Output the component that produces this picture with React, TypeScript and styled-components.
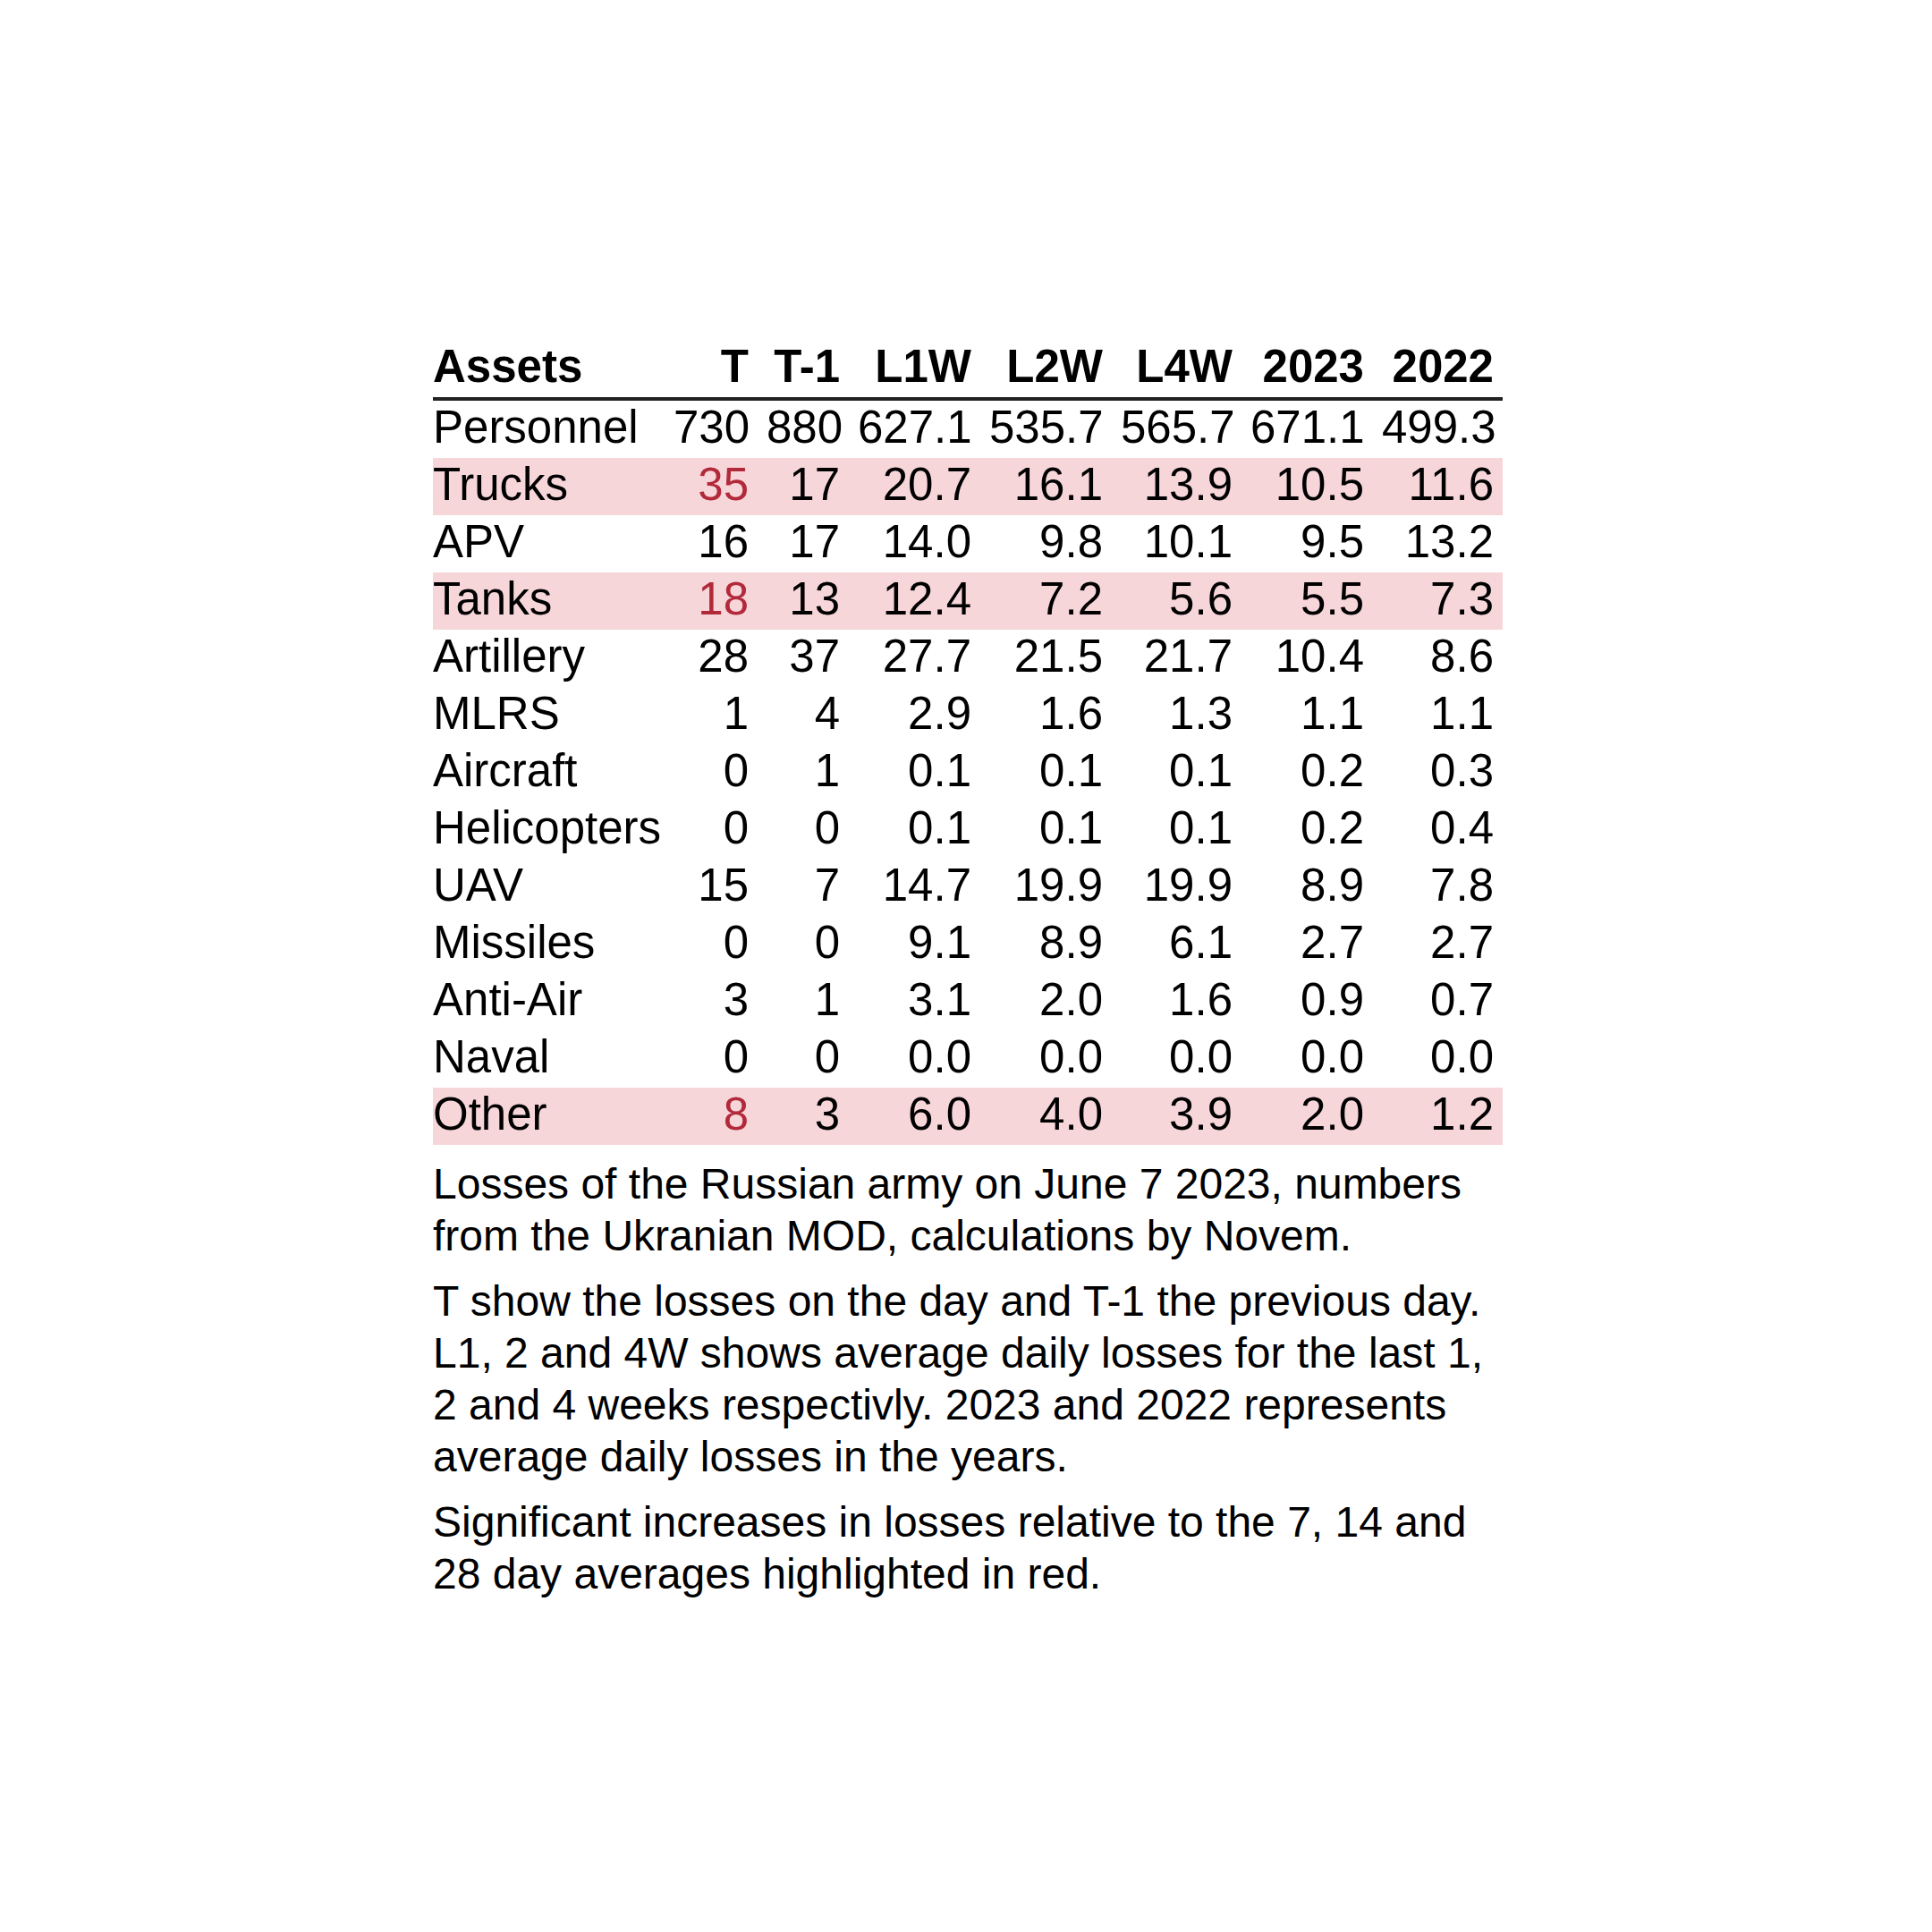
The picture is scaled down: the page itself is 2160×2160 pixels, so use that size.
import React from 'react'
import styled, { createGlobalStyle } from 'styled-components'

const GlobalStyle = createGlobalStyle`
  html, body {
    margin: 0;
    padding: 0;
    background: #ffffff;
  }
  body {
    font-family: 'Liberation Sans', Arial, sans-serif;
    color: #000000;
  }
`

const Page = styled.div`
  padding: 380px 0 0 484px;
`

const Wrapper = styled.div`
  width: 1196px;
`

const Table = styled.table`
  width: 1196px;
  table-layout: fixed;
  border-collapse: collapse;
  font-size: 51px;
`

const HeadCell = styled.th<{ $first?: boolean }>`
  font-weight: 700;
  line-height: 60px;
  padding: 0 ${p => (p.$first ? '0' : '10px')} 4px ${p => (p.$first ? '0' : '10px')};
  text-align: ${p => (p.$first ? 'left' : 'right')};
  white-space: nowrap;
  border-bottom: 4px solid #222222;
`

const Row = styled.tr<{ $highlight?: boolean }>`
  background: ${p => (p.$highlight ? '#f7d6da' : 'transparent')};
`

const Cell = styled.td<{ $first?: boolean; $alert?: boolean }>`
  height: 64px;
  box-sizing: border-box;
  line-height: 60px;
  padding: 0 ${p => (p.$first ? '0' : '10px')} 4px ${p => (p.$first ? '0' : '10px')};
  text-align: ${p => (p.$first ? 'left' : 'right')};
  white-space: nowrap;
  color: ${p => (p.$alert ? '#b22a3a' : '#000000')};
`

const Notes = styled.div`
  display: flex;
  flex-direction: column;
  gap: 15px;
  margin-top: 15px;
`

const Note = styled.p`
  margin: 0;
  font-size: 48px;
  line-height: 58px;
`

const columns = ['Assets', 'T', 'T-1', 'L1W', 'L2W', 'L4W', '2023', '2022']
const widths = [259, 104, 102, 147, 147, 145, 147, 145]

type Asset = {
  name: string
  values: string[]
  highlight?: boolean
}

const assets: Asset[] = [
  { name: 'Personnel', values: ['730', '880', '627.1', '535.7', '565.7', '671.1', '499.3'] },
  { name: 'Trucks', values: ['35', '17', '20.7', '16.1', '13.9', '10.5', '11.6'], highlight: true },
  { name: 'APV', values: ['16', '17', '14.0', '9.8', '10.1', '9.5', '13.2'] },
  { name: 'Tanks', values: ['18', '13', '12.4', '7.2', '5.6', '5.5', '7.3'], highlight: true },
  { name: 'Artillery', values: ['28', '37', '27.7', '21.5', '21.7', '10.4', '8.6'] },
  { name: 'MLRS', values: ['1', '4', '2.9', '1.6', '1.3', '1.1', '1.1'] },
  { name: 'Aircraft', values: ['0', '1', '0.1', '0.1', '0.1', '0.2', '0.3'] },
  { name: 'Helicopters', values: ['0', '0', '0.1', '0.1', '0.1', '0.2', '0.4'] },
  { name: 'UAV', values: ['15', '7', '14.7', '19.9', '19.9', '8.9', '7.8'] },
  { name: 'Missiles', values: ['0', '0', '9.1', '8.9', '6.1', '2.7', '2.7'] },
  { name: 'Anti-Air', values: ['3', '1', '3.1', '2.0', '1.6', '0.9', '0.7'] },
  { name: 'Naval', values: ['0', '0', '0.0', '0.0', '0.0', '0.0', '0.0'] },
  { name: 'Other', values: ['8', '3', '6.0', '4.0', '3.9', '2.0', '1.2'], highlight: true },
]

export default function App() {
  return (
    <Page>
      <GlobalStyle />
      <Wrapper>
        <Table>
          <colgroup>
            {widths.map((w, i) => (
              <col key={i} style={{ width: w }} />
            ))}
          </colgroup>
          <thead>
            <tr>
              {columns.map((c, i) => (
                <HeadCell key={c} $first={i === 0}>
                  {c}
                </HeadCell>
              ))}
            </tr>
          </thead>
          <tbody>
            {assets.map(a => (
              <Row key={a.name} $highlight={a.highlight}>
                <Cell $first>{a.name}</Cell>
                {a.values.map((v, i) => (
                  <Cell key={i} $alert={a.highlight && i === 0}>
                    {v}
                  </Cell>
                ))}
              </Row>
            ))}
          </tbody>
        </Table>

        <Notes>
          <Note>
            Losses of the Russian army on June 7 2023, numbers from the Ukranian MOD,
            calculations by Novem.
          </Note>
          <Note>
            T show the losses on the day and T-1 the previous day. L1, 2 and 4W shows
            average daily losses for the last 1, 2 and 4 weeks respectivly. 2023 and 2022
            represents average daily losses in the years.
          </Note>
          <Note>
            Significant increases in losses relative to the 7, 14 and 28 day averages
            highlighted in red.
          </Note>
        </Notes>
      </Wrapper>
    </Page>
  )
}
